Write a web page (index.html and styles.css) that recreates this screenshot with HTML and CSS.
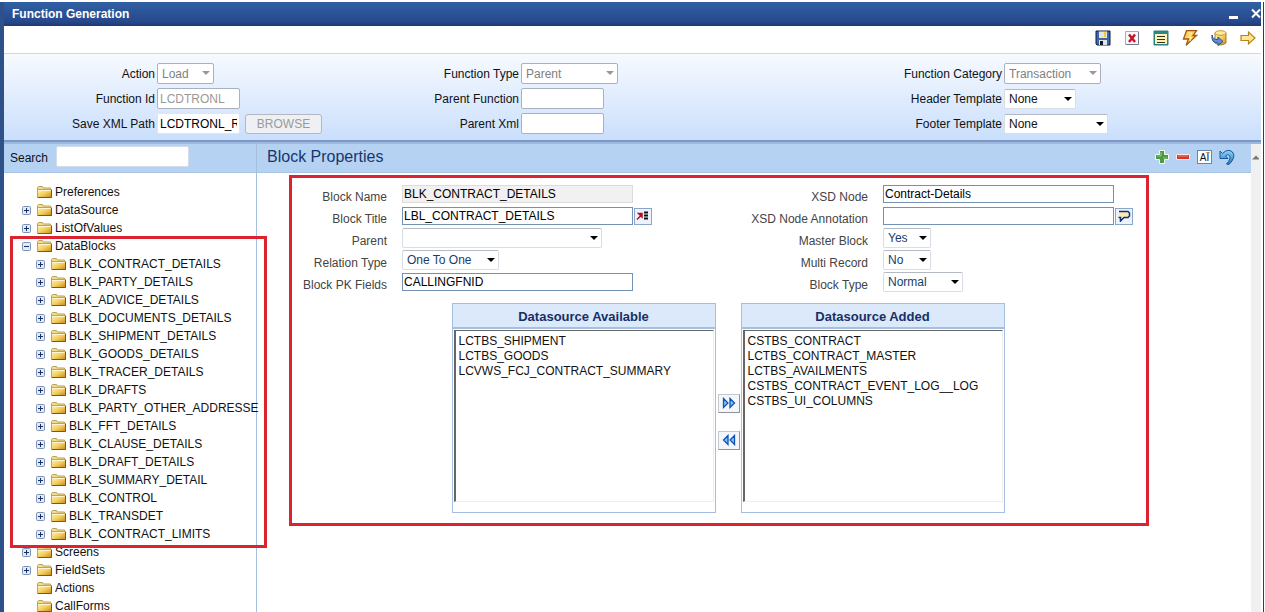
FILE: index.html
```html
<!DOCTYPE html>
<html lang="en">
<head>
  <meta charset="UTF-8" />
  <meta name="viewport" content="width=device-width, initial-scale=1.0" />
  <title>Function Generation</title>
  <link rel="stylesheet" href="styles.css">
</head>
<body>
  <!-- shared tree icons -->
  <svg class="defs" aria-hidden="true">
    <defs>
      <linearGradient id="gold" x1="0" y1="0" x2="1" y2="1">
        <stop offset="0" stop-color="#fff3b0" />
        <stop offset="0.5" stop-color="#f5cf62" />
        <stop offset="1" stop-color="#c98a10" />
      </linearGradient>
      <linearGradient id="blue" x1="0" y1="0" x2="0" y2="1">
        <stop offset="0" stop-color="#8fd4f7" />
        <stop offset="1" stop-color="#1f78c4" />
      </linearGradient>
    </defs>
    <symbol id="folder" viewBox="0 0 15 12">
      <path d="M.5 11V1.500L1.500.5H5.500L6.500 2H13.500V4" fill="#f3dc8c" stroke="#b9a160" />
      <rect x=".5" y="3.500" width="14" height="8" fill="url(#gold)" stroke="#c9a24a" />
      <path d="M1 4.500H13.500" stroke="#fff6cf" />
      <path d="M1 11.500H14.500V4" fill="none" stroke="#7d5a12" />
    </symbol>
    <symbol id="plus" viewBox="0 0 9 9">
      <rect x=".5" y=".5" width="8" height="8" rx="1" fill="#e3eaf4" stroke="#7d93b5" />
      <path d="M2 4.500H7M4.500 2V7" stroke="#1b2f66" />
    </symbol>
    <symbol id="minus" viewBox="0 0 9 9">
      <rect x=".5" y=".5" width="8" height="8" rx="1" fill="#e3eaf4" stroke="#7d93b5" />
      <path d="M2 4.500H7" stroke="#1b2f66" />
    </symbol>
  </svg>

  <div class="window">
    <header class="titlebar">
      <h1>Function Generation</h1>
      <div class="window-buttons">
        <button type="button" aria-label="Minimize"><svg width="9" height="12" viewBox="0 0 9 12"><path d="M0 9.500H9" stroke="#fff" stroke-width="3" /></svg></button>
        <button type="button" aria-label="Close"><svg width="10" height="12" viewBox="0 0 10 12"><path d="M1 1.500L9 9.500M9 1.500L1 9.500" stroke="#fff" stroke-width="2" /></svg></button>
      </div>
    </header>

    <nav class="toolbar">
      <button type="button" aria-label="Save">
        <svg width="16" height="16" viewBox="0 0 16 16">
          <path d="M1 1H15V15H2L1 14Z" fill="#3f68a8" stroke="#0e1d3e" />
          <path d="M4 1.500H12V8H4Z" fill="#f3e9b0" />
          <path d="M4 2.500H12V5H4Z" fill="#d9e7fa" />
          <path d="M9 2H11V7H9Z" fill="#f2c93f" />
          <path d="M4 10H12V15H4Z" fill="#dfe4ec" />
          <path d="M5 11H8V15H5Z" fill="#10182c" />
        </svg>
      </button>
      <button type="button" aria-label="Delete">
        <svg width="16" height="16" viewBox="0 0 16 16">
          <path d="M1.500 1.500H14.500V14.500H1.500Z" fill="#f5f7fa" stroke="#a3adbc" />
          <path d="M2 14.500H14.500V2" fill="none" stroke="#6d7a90" />
          <path d="M5 4.500L11 12M11 4.500L5 12" stroke="#cc1420" stroke-width="2.500" />
        </svg>
      </button>
      <button type="button" aria-label="Details">
        <svg width="16" height="16" viewBox="0 0 16 16">
          <path d="M1 1H15V15H1Z" fill="#2b8a86" stroke="#2d7f80" />
          <path d="M2 4H14V14H2Z" fill="#fdf3b4" />
          <path d="M4 6.500H12M4 9.500H12M4 12.500H12" stroke="#38321e" />
        </svg>
      </button>
      <button type="button" aria-label="Generate">
        <svg width="16" height="16" viewBox="0 0 16 16">
          <path d="M4.500.7H14.500L11 5.500H14.500L4 15.300L6.500 9H1.500Z" fill="#ffd25a" stroke="#a8560d" stroke-width="1.300" />
          <path d="M6 3H10L6 7.500H9.500L8 11" fill="none" stroke="#fff0b0" />
        </svg>
      </button>
      <button type="button" aria-label="Deploy">
        <svg width="16" height="16" viewBox="0 0 16 16">
          <path d="M4 3V13Q9.500 17 15 13V3Z" fill="url(#gold)" stroke="#b27a16" />
          <ellipse cx="9.500" cy="3" rx="5.500" ry="2.300" fill="#ffeaa0" stroke="#c9922c" />
          <path d="M1 5Q1.500 10 7 9.500V7L12 11.500L7 15.500V13Q0 13 1 5Z" fill="#5d8ee0" stroke="#27509c" />
        </svg>
      </button>
      <button type="button" aria-label="Next">
        <svg width="16" height="16" viewBox="0 0 16 16">
          <path d="M1 5.500H8.500V2L15 8L8.500 14V10.500H1Z" fill="#ffe795" stroke="#b98218" stroke-width="1.200" />
        </svg>
      </button>
    </nav>

    <form class="function-form">
      <div class="form-col">
        <div class="field">
          <label for="action">Action</label>
          <span class="dropdown disabled w-57"><select id="action" disabled><option>Load</option></select></span>
        </div>
        <div class="field">
          <label for="functionId">Function Id</label>
          <input type="text" id="functionId" value="LCDTRONL" disabled />
        </div>
        <div class="field">
          <label for="xmlPath">Save XML Path</label>
          <input type="text" id="xmlPath" class="plain" value="LCDTRONL_RAD.xml" />
          <button type="button" class="browse" disabled>BROWSE</button>
        </div>
      </div>
      <div class="form-col">
        <div class="field">
          <label for="functionType">Function Type</label>
          <span class="dropdown disabled w-97"><select id="functionType" disabled><option>Parent</option></select></span>
        </div>
        <div class="field">
          <label for="parentFunction">Parent Function</label>
          <input type="text" id="parentFunction" disabled />
        </div>
        <div class="field">
          <label for="parentXml">Parent Xml</label>
          <input type="text" id="parentXml" disabled />
        </div>
      </div>
      <div class="form-col">
        <div class="field">
          <label for="category">Function Category</label>
          <span class="dropdown disabled w-97"><select id="category" disabled><option>Transaction</option></select></span>
        </div>
        <div class="field">
          <label for="headerTemplate">Header Template</label>
          <span class="dropdown w-72"><select id="headerTemplate"><option>None</option></select></span>
        </div>
        <div class="field">
          <label for="footerTemplate">Footer Template</label>
          <span class="dropdown w-104"><select id="footerTemplate"><option>None</option></select></span>
        </div>
      </div>
    </form>

    <div class="workspace">
      <aside class="sidebar">
        <div class="search">
          <label for="search">Search</label>
          <input type="text" id="search" />
        </div>
        <ul class="tree">
          <li><div class="node"><span class="toggle"></span><svg class="folder"><use href="#folder" /></svg><a href="#">Preferences</a></div></li>
          <li><div class="node"><button type="button" class="toggle" aria-label="Expand"><svg><use href="#plus" /></svg></button><svg class="folder"><use href="#folder" /></svg><a href="#">DataSource</a></div></li>
          <li><div class="node"><button type="button" class="toggle" aria-label="Expand"><svg><use href="#plus" /></svg></button><svg class="folder"><use href="#folder" /></svg><a href="#">ListOfValues</a></div></li>
          <li class="marked">
            <div class="node"><button type="button" class="toggle" aria-label="Collapse"><svg><use href="#minus" /></svg></button><svg class="folder"><use href="#folder" /></svg><a href="#">DataBlocks</a></div>
            <ul id="blocks"></ul>
          </li>
          <li><div class="node"><button type="button" class="toggle" aria-label="Expand"><svg><use href="#plus" /></svg></button><svg class="folder"><use href="#folder" /></svg><a href="#">Screens</a></div></li>
          <li><div class="node"><button type="button" class="toggle" aria-label="Expand"><svg><use href="#plus" /></svg></button><svg class="folder"><use href="#folder" /></svg><a href="#">FieldSets</a></div></li>
          <li><div class="node"><span class="toggle"></span><svg class="folder"><use href="#folder" /></svg><a href="#">Actions</a></div></li>
          <li><div class="node"><span class="toggle"></span><svg class="folder"><use href="#folder" /></svg><a href="#">CallForms</a></div></li>
        </ul>
      </aside>

      <main class="content">
        <div class="content-header">
          <h2>Block Properties</h2>
          <div class="actions">
            <button type="button" aria-label="Add">
              <svg width="14" height="14" viewBox="0 0 14 14"><path d="M4.500.5H9.500V4.500H13.500V9.500H9.500V13.500H4.500V9.500H.5V4.500H4.500Z" fill="#4d9a45" stroke="#f2faf0" /><path d="M6 2V6H2M8 8H12" fill="none" stroke="#8cc882" /></svg>
            </button>
            <button type="button" aria-label="Remove">
              <svg width="14" height="14" viewBox="0 0 14 14"><path d="M.5 4.500H13.500V9.500H.5Z" fill="#d8362a" stroke="#fbe9e6" /><path d="M2 6H12" stroke="#f08a78" /></svg>
            </button>
            <button type="button" class="rename" aria-label="Rename">AÏ</button>
            <button type="button" aria-label="Undo">
              <svg width="16" height="16" viewBox="0 0 16 16"><path d="M1 2L3.500 4.500Q9 -1 13.500 3Q17.500 8 10 15.500L7.500 15Q12.500 9.500 10.500 6.500Q9 4.500 6.500 7L9 9.500H1Z" fill="url(#blue)" stroke="#17559b" /></svg>
            </button>
          </div>
        </div>

        <section class="panel">
          <form class="block-form">
            <div class="block-col">
              <div class="row">
                <label for="blockName">Block Name</label>
                <input type="text" id="blockName" class="locked" value="BLK_CONTRACT_DETAILS" readonly />
              </div>
              <div class="row">
                <label for="blockTitle">Block Title</label>
                <input type="text" id="blockTitle" value="LBL_CONTRACT_DETAILS" />
                <button type="button" class="lookup" aria-label="List of values">
                  <svg width="14" height="12" viewBox="0 0 14 12"><path d="M1 9.500L4.500 6M2.500 3.500H6V7Z" fill="#b3101c" stroke="#b3101c" stroke-width="1.500" /><path d="M8 2.500H12M8 5.500H12M8 8.500H12" stroke="#111" stroke-width="2" /></svg>
                </button>
              </div>
              <div class="row">
                <label for="parent">Parent</label>
                <span class="dropdown w-200"><select id="parent"><option></option></select></span>
              </div>
              <div class="row">
                <label for="relation">Relation Type</label>
                <span class="dropdown w-97"><select id="relation"><option>One To One</option></select></span>
              </div>
              <div class="row">
                <label for="pkFields">Block PK Fields</label>
                <input type="text" id="pkFields" value="CALLINGFNID" />
              </div>
            </div>
            <div class="block-col">
              <div class="row">
                <label for="xsdNode">XSD Node</label>
                <input type="text" id="xsdNode" value="Contract-Details" />
              </div>
              <div class="row">
                <label for="annotation">XSD Node Annotation</label>
                <input type="text" id="annotation" />
                <button type="button" class="lookup" aria-label="Edit annotation">
                  <svg width="14" height="12" viewBox="0 0 14 12"><path d="M2 1.500H11L12.500 3V6L11 7.500H7L3.500 11V7.500H1.500" fill="#fbe9ae" stroke="#0e2f80" stroke-width="1.500" /></svg>
                </button>
              </div>
              <div class="row">
                <label for="master">Master Block</label>
                <span class="dropdown w-48"><select id="master"><option>Yes</option></select></span>
              </div>
              <div class="row">
                <label for="multi">Multi Record</label>
                <span class="dropdown w-48"><select id="multi"><option>No</option></select></span>
              </div>
              <div class="row">
                <label for="blockType">Block Type</label>
                <span class="dropdown w-80"><select id="blockType"><option>Normal</option></select></span>
              </div>
            </div>
          </form>

          <div class="datasources">
            <div class="listbox">
              <label for="available">Datasource Available</label>
              <select id="available" multiple>
                <option>LCTBS_SHIPMENT</option>
                <option>LCTBS_GOODS</option>
                <option>LCVWS_FCJ_CONTRACT_SUMMARY</option>
              </select>
            </div>
            <div class="movers">
              <button type="button" aria-label="Add datasource"><svg width="14" height="12" viewBox="0 0 14 12"><path d="M1.500 1.500L6 6L1.500 10.500ZM8 1.500L12.500 6L8 10.500Z" fill="#7cc4f5" stroke="#0d53b8" stroke-width="1.300" /></svg></button>
              <button type="button" aria-label="Remove datasource"><svg width="14" height="12" viewBox="0 0 14 12"><path d="M6 1.500L1.500 6L6 10.500ZM12.500 1.500L8 6L12.500 10.500Z" fill="#7cc4f5" stroke="#0d53b8" stroke-width="1.300" /></svg></button>
            </div>
            <div class="listbox">
              <label for="added">Datasource Added</label>
              <select id="added" multiple>
                <option>CSTBS_CONTRACT</option>
                <option>LCTBS_CONTRACT_MASTER</option>
                <option>LCTBS_AVAILMENTS</option>
                <option>CSTBS_CONTRACT_EVENT_LOG__LOG</option>
                <option>CSTBS_UI_COLUMNS</option>
              </select>
            </div>
          </div>
        </section>
      </main>

      <div class="scrollbar"><svg width="8" height="6" viewBox="0 0 8 6"><path d="M1 5.500L5 1.500L8 4.500V5.500Z" fill="#777" /></svg></div>
    </div>
  </div>

  <script>
    const blocks = [
      'BLK_CONTRACT_DETAILS', 'BLK_PARTY_DETAILS', 'BLK_ADVICE_DETAILS', 'BLK_DOCUMENTS_DETAILS',
      'BLK_SHIPMENT_DETAILS', 'BLK_GOODS_DETAILS', 'BLK_TRACER_DETAILS', 'BLK_DRAFTS',
      'BLK_PARTY_OTHER_ADDRESSE', 'BLK_FFT_DETAILS', 'BLK_CLAUSE_DETAILS', 'BLK_DRAFT_DETAILS',
      'BLK_SUMMARY_DETAIL', 'BLK_CONTROL', 'BLK_TRANSDET', 'BLK_CONTRACT_LIMITS'
    ];

    document.getElementById('blocks').innerHTML = blocks.map(name => `
      <li><div class="node">
        <button type="button" class="toggle" aria-label="Expand"><svg><use href="#plus" /></svg></button>
        <svg class="folder"><use href="#folder" /></svg>
        <a href="#">${name}</a>
      </div></li>`).join('');
  </script>
</body>
</html>
```

FILE: styles.css
```css
:root {
  --navy: #27498c;
  --bar: #b5d2f3;
  --line: #a5c0de;
  --input-border: #7391b3;
  --mark: #dc2430;
}

* {
  box-sizing: border-box;
}

body {
  margin: 0;
  height: 100vh;
  overflow: hidden;
  padding: 2px 1px 0 0;
  font-family: "Liberation Sans", Arial, sans-serif;
  font-size: 12px;
  color: #111;
  background: #fff;
}

.defs {
  position: absolute;
  width: 0;
  height: 0;
}

.window {
  display: flex;
  flex-direction: column;
  height: 100%;
  border-left: 4px solid #2f5189;
  border-right: 1px solid #3c3c40;
  padding-right: 2px;
}

h1, h2, ul {
  margin: 0;
  padding: 0;
}

ul {
  list-style: none;
}

button, input, select {
  font: inherit;
  margin: 0;
}

button {
  display: flex;
  align-items: center;
  justify-content: center;
  padding: 0;
  border: none;
  background: none;
}

.titlebar {
  display: flex;
  flex: none;
  justify-content: space-between;
  align-items: center;
  height: 24px;
  padding-left: 8px;
  background: linear-gradient(#3160a4, var(--navy) 80%, #1d3a75);
  color: #fff;
}

.titlebar h1 {
  font-size: 12px;
}

.window-buttons {
  display: flex;
  gap: 13px;
}

.toolbar {
  display: flex;
  flex: none;
  justify-content: flex-end;
  align-items: center;
  gap: 13px;
  height: 28px;
  padding: 0 5px 3px 0;
  border-bottom: 1px solid #c6dae8;
}

.function-form {
  display: grid;
  flex: none;
  grid-template-columns: 29fr 38fr 33fr;
  grid-template-columns: 364fr 483fr 410fr;
  padding: 7px 0 4px;
  background: linear-gradient(#f7faff, #cadffc);
  border-bottom: 2px solid #7b98c6;
}

.field {
  display: flex;
  align-items: center;
  height: 25px;
}

.field label {
  width: 151px;
  margin-right: 2px;
  text-align: right;
}

input[type="text"] {
  border: 1px solid #a9b1bf;
  background: #fff;
  color: #000;
}

.field input[type="text"] {
  width: 83px;
  height: 21px;
  padding: 0 2px;
  border-radius: 2px;
}

.field input:disabled {
  color: #999;
}

.field input.plain {
  border-color: #dfe6f0;
}

.browse {
  width: 77px;
  height: 20px;
  margin-left: 5px;
  border: 1px solid #b3b7bf;
  border-radius: 3px;
  background: #eef0f3;
  color: #9a9a9a;
}

.dropdown {
  position: relative;
  display: inline-block;
  height: 20px;
}

.dropdown::after {
  content: "";
  position: absolute;
  right: 4px;
  top: 8px;
  border: 4px solid transparent;
  border-top-color: #000;
  border-bottom: none;
  pointer-events: none;
}

.dropdown select {
  appearance: none;
  display: block;
  width: 100%;
  height: 100%;
  padding: 0 4px;
  border: 1px solid #d9dde4;
  border-top-color: #b4bac4;
  border-radius: 2px;
  background: #fff;
  color: #111;
}

.dropdown.disabled {
  height: 21px;
}

.dropdown.disabled select {
  border-color: #a9b1bf;
  color: #808080;
  opacity: 1;
}

.dropdown.disabled::after {
  border-top-color: #999;
}

.w-48 { width: 48px; }
.w-57 { width: 57px; }
.w-72 { width: 72px; }
.w-80 { width: 80px; }
.w-97 { width: 97px; }
.w-104 { width: 104px; }
.w-200 { width: 200px; }

.workspace {
  display: flex;
  flex: 1;
  min-height: 0;
}

.sidebar {
  flex: none;
  width: 253px;
  border-right: 1px solid var(--line);
}

.search {
  display: flex;
  align-items: center;
  gap: 8px;
  height: 31px;
  padding-left: 6px;
  padding-bottom: 3px;
  background: var(--bar);
  border-top: 2px solid #9db9df;
  border-bottom: 1px solid #a9c4e6;
}

.search label {
  padding-top: 3px;
}

.search input[type="text"] {
  width: 133px;
  height: 21px;
  border-color: #d3dcea;
  border-radius: 2px;
}

.tree {
  padding-top: 10px;
}

.node {
  display: flex;
  align-items: center;
  height: 18px;
  padding-left: 18px;
  white-space: nowrap;
}

.node a {
  color: #111;
  text-decoration: none;
}

.toggle {
  flex: none;
  width: 9px;
  height: 9px;
  margin-right: 6px;
}

.toggle svg {
  width: 9px;
  height: 9px;
}

.folder {
  flex: none;
  width: 15px;
  height: 12px;
  margin-right: 3px;
}

.tree ul .node {
  padding-left: 32px;
}

.marked {
  position: relative;
}

.marked::after {
  content: "";
  position: absolute;
  inset: -1px -11px -5px 6px;
  border: 3px solid var(--mark);
  pointer-events: none;
}

.content {
  flex: 1;
  min-width: 0;
}

.content-header {
  display: flex;
  justify-content: space-between;
  align-items: center;
  height: 31px;
  padding: 0 16px 2px 10px;
  background: var(--bar);
  border-top: 2px solid #9db9df;
  border-bottom: 1px solid #a9c4e6;
}

.content-header h2 {
  font-size: 16px;
  font-weight: normal;
  color: #17376b;
}

.actions {
  display: flex;
  align-items: center;
  gap: 7px;
}

.actions .rename {
  width: 15px;
  height: 14px;
  border: 1px solid #6b84ad;
  background: #fff;
  font-size: 10px;
  color: #111;
}

.panel {
  margin: 2px 102px 0 32px;
  padding: 5px 0 10px;
  border: 3px solid var(--mark);
}

.block-form {
  display: grid;
  grid-template-columns: 481px 1fr;
}

.row {
  display: flex;
  align-items: center;
  height: 22px;
  color: #173d68;
}

.row label {
  width: 95px;
  margin-right: 15px;
  padding-top: 5px;
  text-align: right;
  white-space: nowrap;
  color: #444;
}

.row input[type="text"] {
  width: 231px;
  height: 18px;
  padding: 0 1px;
  border-color: var(--input-border);
}

.row input.locked {
  border-color: #dcdcdc;
  background: #f1f1f1;
}

.row select {
  color: #173d68;
}

/* the annotation label is wider than its column and grows to the left */
.block-col + .block-col label {
  direction: rtl;
}

.lookup {
  width: 18px;
  height: 17px;
  margin-left: 1px;
  border: 1px solid #8ba5cb;
  background: #edf3fc;
}

.datasources {
  display: flex;
  justify-content: center;
  padding: 10px 0 0 18px;
}

.listbox {
  width: 264px;
  height: 210px;
  border: 1px solid var(--line);
}

.listbox label {
  display: block;
  height: 25px;
  line-height: 25px;
  border-bottom: 2px solid var(--line);
  background: #dbe9fb;
  color: #173063;
  font-size: 13px;
  font-weight: bold;
  text-align: center;
}

.listbox select {
  display: block;
  width: 260px;
  height: 172px;
  margin: 1px auto 0;
  padding: 3px 2px;
  border: 1px solid #eee;
  border-top: 1px solid #666;
  border-left: 2px solid #666;
  border-radius: 0;
  background: #fff;
  color: #111;
  overflow: hidden;
}

.listbox option {
  height: 15px;
  min-height: 15px;
  padding: 0 1px;
  line-height: 15px;
}

.movers {
  display: flex;
  flex-direction: column;
  justify-content: center;
  gap: 18px;
  width: 25px;
  padding: 27px 0 0 2px;
}

.movers button {
  width: 22px;
  height: 19px;
  border: 1px solid #c4c8cf;
  border-right-color: #8e939c;
  border-bottom-color: #8e939c;
  background: #f4f6f9;
}

.scrollbar {
  flex: none;
  width: 10px;
  padding-top: 5px;
  background: #f0f0f0;
  border-top: 2px solid #9db9df;
}
```
